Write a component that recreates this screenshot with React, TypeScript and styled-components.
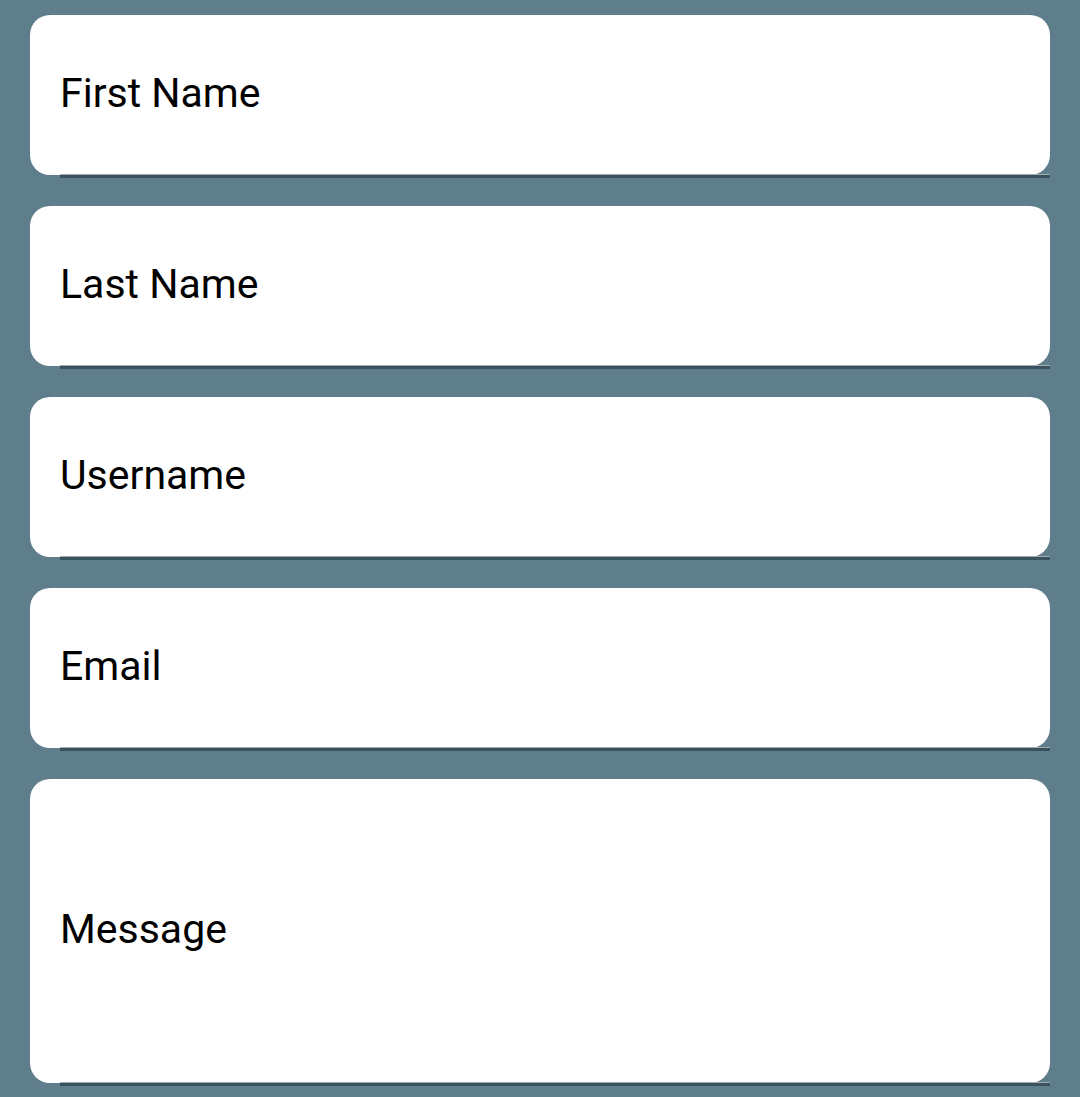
import React from "react";
import styled, { createGlobalStyle } from "styled-components";

const GlobalStyle = createGlobalStyle`
  html, body {
    margin: 0;
    padding: 0;
    background: #5f7e8b;
  }
  body {
    font-family: Roboto, "Noto Sans", sans-serif;
  }
`;

const Form = styled.form`
  display: flex;
  flex-direction: column;
  gap: 31px;
  padding: 15px 30px 14px;
`;

const Field = styled.label<{ $tall?: boolean }>`
  position: relative;
  display: flex;
  align-items: center;
  height: ${(p) => (p.$tall ? "304px" : "160px")};
  padding: 0 30px;
  padding-bottom: 5px;
  box-sizing: border-box;
  background: #ffffff;
  border-radius: 20px;
  font-size: 41px;
  color: #000000;

  &::after {
    content: "";
    position: absolute;
    left: 30px;
    right: 0;
    bottom: -3px;
    height: 4px;
    background: linear-gradient(#a4abaf 0 35%, #3a525d 35% 100%);
  }
`;

const fields = [
  { label: "First Name" },
  { label: "Last Name" },
  { label: "Username" },
  { label: "Email" },
  { label: "Message", tall: true },
];

const App = () => {
  return (
    <>
      <GlobalStyle />
      <Form>
        {fields.map((f) => (
          <Field key={f.label} $tall={f.tall}>
            {f.label}
          </Field>
        ))}
      </Form>
    </>
  );
};

export default App;
